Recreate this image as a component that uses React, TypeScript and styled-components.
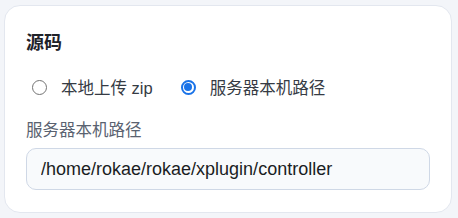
import React from "react";
import styled, { createGlobalStyle } from "styled-components";

const Global = createGlobalStyle`
  html, body { margin: 0; padding: 0; background: #f3f5f9; }
  body { font-family: "Liberation Sans", "Noto Sans CJK SC", sans-serif; }
  * { box-sizing: border-box; }
`;

const Page = styled.div`
  width: 458px;
  height: 218px;
  padding: 5px 6px 5px 4px;
`;

const Card = styled.section`
  height: 208px;
  background: #ffffff;
  border: 1px solid #e3e7ef;
  border-radius: 16px;
  padding: 24px 21px 0 21px;
  display: flex;
  flex-direction: column;
`;

const Title = styled.h2`
  margin: 0;
  font-size: 18px;
  font-weight: 700;
  line-height: 26px;
  color: #1f2329;
`;

const RadioRow = styled.div`
  display: flex;
  align-items: center;
  gap: 28px;
  margin-top: 20px;
  padding-left: 6px;
  height: 22px;
`;

const RadioOption = styled.label`
  display: flex;
  align-items: center;
  gap: 14px;
  font-size: 16.5px;
  color: #363b44;
  cursor: pointer;
`;

const RadioCircle = styled.span<{ $checked?: boolean }>`
  flex: none;
  width: 15px;
  height: 15px;
  border-radius: 50%;
  border: ${(p) => (p.$checked ? "2px solid #1a73e8" : "1.8px solid #737373")};
  display: flex;
  align-items: center;
  justify-content: center;
  &::after {
    content: "";
    width: 8px;
    height: 8px;
    border-radius: 50%;
    background: ${(p) => (p.$checked ? "#1a73e8" : "transparent")};
  }
`;

const FieldLabel = styled.div`
  margin-top: 21px;
  font-size: 16.5px;
  line-height: 22px;
  color: #5a6270;
`;

const Input = styled.input`
  margin-top: 7px;
  width: 404px;
  height: 42px;
  border: 1px solid #cfd8e6;
  border-radius: 10px;
  background: #f8fafc;
  padding: 0 14px;
  font-family: "Liberation Sans", "Noto Sans CJK SC", sans-serif;
  font-size: 18px;
  color: #1a1d23;
  outline: none;
`;

export default function App() {
  return (
    <>
      <Global />
      <Page>
        <Card>
          <Title>源码</Title>
          <RadioRow>
            <RadioOption>
              <RadioCircle />
              本地上传 zip
            </RadioOption>
            <RadioOption>
              <RadioCircle $checked />
              服务器本机路径
            </RadioOption>
          </RadioRow>
          <FieldLabel>服务器本机路径</FieldLabel>
          <Input readOnly value="/home/rokae/rokae/xplugin/controller" />
        </Card>
      </Page>
    </>
  );
}
